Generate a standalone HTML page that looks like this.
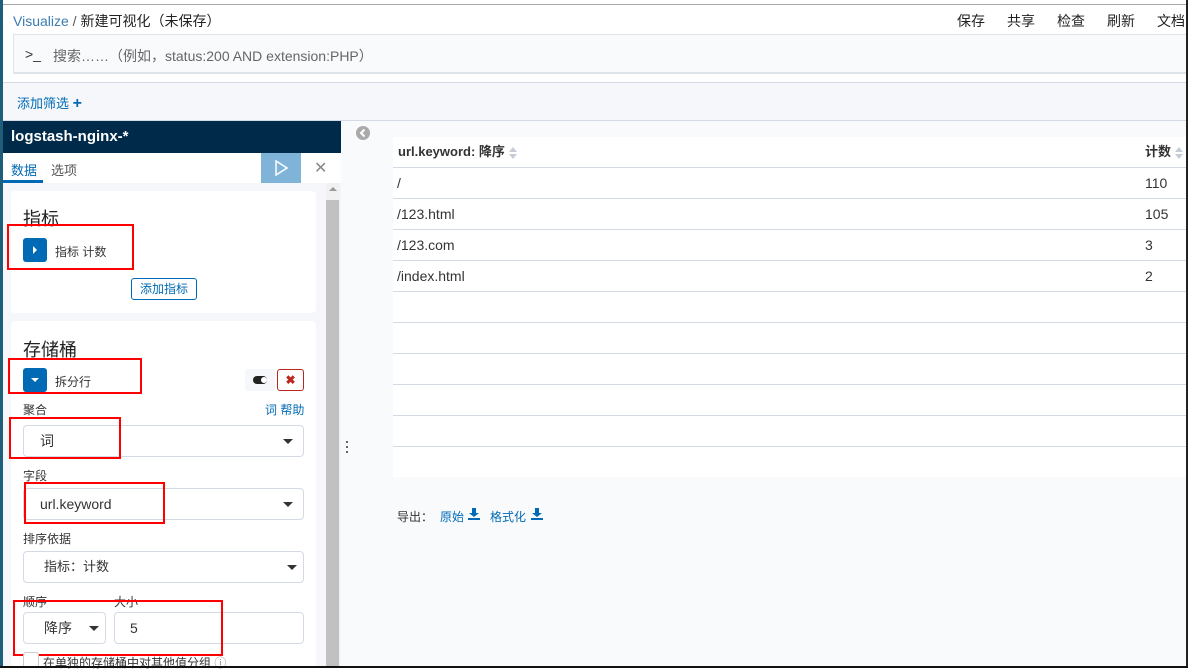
<!DOCTYPE html>
<html><head><meta charset="utf-8"><style>
*{box-sizing:border-box;margin:0;padding:0}
body{width:1188px;height:668px;position:relative;overflow:hidden;background:#fff;font-family:"Liberation Sans","Noto Sans CJK SC",sans-serif;font-size:13px;color:#333}
.a{position:absolute}
.red{position:absolute;border:2px solid #f00}
.sel{position:absolute;background:#fff;border:1px solid #d3dae6;border-radius:4px;height:32px;font-size:14px;line-height:30px;padding-left:16px;color:#333}
.car{position:absolute;right:10px;top:13px;width:0;height:0;border-left:5px solid transparent;border-right:5px solid transparent;border-top:5px solid #333}
.row{position:absolute;left:393px;width:795px;height:31px;border-bottom:1px solid #d3dae6;font-size:14px;line-height:30px}
.srt{display:inline-block;vertical-align:middle;width:9px;height:12px;position:relative}
.srt:before{content:"";position:absolute;left:0;top:0;border-left:4px solid transparent;border-right:4px solid transparent;border-bottom:5px solid #c5ccd6}
.srt:after{content:"";position:absolute;left:0;top:7px;border-left:4px solid transparent;border-right:4px solid transparent;border-top:5px solid #c5ccd6}
</style></head><body>
<div class="a" style="left:0;top:4px;width:1188px;height:1px;background:#aaa"></div>
<div class="a" style="left:13px;top:11px;font-size:14px;color:#3a7bb0">Visualize <span style="color:#555">/</span> <span style="color:#222">新建可视化（未保存）</span></div>
<div class="a" style="left:957px;top:11px;font-size:14px;color:#222">保存</div>
<div class="a" style="left:1007px;top:11px;font-size:14px;color:#222">共享</div>
<div class="a" style="left:1057px;top:11px;font-size:14px;color:#222">检查</div>
<div class="a" style="left:1107px;top:11px;font-size:14px;color:#222">刷新</div>
<div class="a" style="left:1157px;top:11px;font-size:14px;color:#222;width:30px;overflow:hidden;white-space:nowrap">文档</div>
<div class="a" style="left:13px;top:34px;width:1175px;height:40px;background:#f9fafc;border:1px solid #dfe3ea;border-bottom:2px solid #dfe3ea"></div>
<div class="a" style="left:25px;top:46px;font-size:14px;color:#333">&gt;_</div>
<div class="a" style="left:53px;top:46px;font-size:14px;color:#666">搜索……（例如，status:200 AND extension:PHP）</div>
<div class="a" style="left:0;top:82px;width:1188px;height:39px;background:#f5f7fa;border-top:1px solid #d3dae6;border-bottom:1px solid #d3dae6"></div>
<div class="a" style="left:17px;top:93px;font-size:13px;color:#006bb4">添加筛选 <b style="font-size:16px">+</b></div>
<div class="a" style="left:3px;top:121px;width:338px;height:547px;background:#f5f7fa"></div>
<div class="a" style="left:3px;top:121px;width:338px;height:32px;background:#002a4a;color:#fff;font-weight:bold;font-size:15px;line-height:32px;padding-left:8px">logstash-nginx-*</div>
<div class="a" style="left:3px;top:153px;width:338px;height:30px;background:#fff"></div>
<div class="a" style="left:11px;top:160px;font-size:13px;color:#006bb4">数据</div>
<div class="a" style="left:3px;top:180px;width:40px;height:3px;background:#006bb4"></div>
<div class="a" style="left:51px;top:160px;font-size:13px;color:#555">选项</div>
<div class="a" style="left:261px;top:153px;width:40px;height:30px;background:#7fb3d8"></div>
<svg class="a" style="left:274px;top:160px" width="14" height="16"><path d="M2 1 L13 8 L2 15 Z" fill="none" stroke="#fff" stroke-width="1.5"/></svg>
<div class="a" style="left:314px;top:158px;font-size:16px;color:#888">✕</div>
<div class="a" style="left:326px;top:183px;width:14px;height:485px;background:#f1f1f1"></div>
<div class="a" style="left:326px;top:200px;width:13px;height:468px;background:#c1c1c1"></div>
<div class="a" style="left:329px;top:187px;width:0;height:0;border-left:4px solid transparent;border-right:4px solid transparent;border-bottom:4px solid #999"></div>
<div class="a" style="left:11px;top:191px;width:305px;height:122px;background:#fff;border-radius:4px"></div>
<div class="a" style="left:23px;top:205px;font-size:18px;color:#222">指标</div>
<div class="a" style="left:23px;top:238px;width:24px;height:24px;background:#006bb4;border-radius:3px"></div>
<div class="a" style="left:33px;top:246px;width:0;height:0;border-top:4px solid transparent;border-bottom:4px solid transparent;border-left:4px solid #fff"></div>
<div class="a" style="left:55px;top:243px;font-size:12px;color:#333">指标 计数</div>
<div class="red" style="left:7px;top:224px;width:127px;height:46px"></div>
<div class="a" style="left:131px;top:278px;width:66px;height:22px;border:1px solid #006bb4;border-radius:3px;font-size:12px;color:#006bb4;text-align:center;line-height:20px">添加指标</div>
<div class="a" style="left:11px;top:321px;width:305px;height:347px;background:#fff;border-radius:4px"></div>
<div class="a" style="left:23px;top:336px;font-size:18px;color:#222">存储桶</div>
<div class="a" style="left:23px;top:368px;width:24px;height:24px;background:#006bb4;border-radius:3px"></div>
<div class="a" style="left:31px;top:378px;width:0;height:0;border-left:4px solid transparent;border-right:4px solid transparent;border-top:4px solid #fff"></div>
<div class="a" style="left:55px;top:373px;font-size:12px;color:#333">拆分行</div>
<div class="red" style="left:8px;top:358px;width:134px;height:36px"></div>
<div class="a" style="left:245px;top:369px;width:30px;height:22px;background:#f5f7fa;border-radius:3px"></div>
<div class="a" style="left:253px;top:376px;width:14px;height:8px;border-radius:4px;background:#222"></div>
<div class="a" style="left:261px;top:377px;width:6px;height:6px;border-radius:3px;background:#fff"></div>
<div class="a" style="left:277px;top:369px;width:27px;height:22px;border:1px solid #bd271e;border-radius:3px;color:#bd271e;font-size:12px;text-align:center;line-height:20px;font-weight:bold">✖</div>
<div class="a" style="left:23px;top:401px;font-size:12px;color:#333">聚合</div>
<div class="a" style="left:265px;top:401px;font-size:12px;color:#006bb4">词 帮助</div>
<div class="sel" style="left:23px;top:425px;width:281px">词<div class="car"></div></div>
<div class="red" style="left:9px;top:417px;width:112px;height:42px"></div>
<div class="a" style="left:23px;top:467px;font-size:12px;color:#333">字段</div>
<div class="sel" style="left:23px;top:488px;width:281px">url.keyword<div class="car"></div></div>
<div class="red" style="left:24px;top:482px;width:141px;height:42px"></div>
<div class="a" style="left:23px;top:530px;font-size:12px;color:#333">排序依据</div>
<div class="sel" style="left:23px;top:551px;width:281px;padding-left:20px;font-size:13px">指标：计数<div class="car" style="right:6px"></div></div>
<div class="a" style="left:23px;top:593px;font-size:12px;color:#333">顺序</div>
<div class="a" style="left:114px;top:593px;font-size:12px;color:#333">大小</div>
<div class="sel" style="left:23px;top:612px;width:83px;padding-left:20px">降序<div class="car" style="right:6px"></div></div>
<div class="sel" style="left:114px;top:612px;width:190px;padding-left:15px">5</div>
<div class="red" style="left:13px;top:600px;width:210px;height:56px"></div>
<div class="a" style="left:23px;top:652px;width:16px;height:16px;border:1px solid #ccc;border-radius:3px;background:#fff"></div>
<div class="a" style="left:43px;top:654px;font-size:12px;color:#333">在单独的存储桶中对其他值分组 <span style="color:#888">ⓘ</span></div>
<div class="a" style="left:0;top:0;width:3px;height:668px;background:#1f5e7a"></div>
<div class="a" style="left:341px;top:121px;width:847px;height:547px;background:#f9fafc"></div>
<svg class="a" style="left:356px;top:126px" width="14" height="14"><circle cx="7" cy="7" r="7" fill="#aaa"/><path d="M8.5 3.5 L5 7 L8.5 10.5" fill="none" stroke="#fff" stroke-width="2"/></svg>
<svg class="a" style="left:346px;top:441px" width="3" height="12"><rect x="0" y="0" width="2" height="2" fill="#666"/><rect x="0" y="5" width="2" height="2" fill="#666"/><rect x="0" y="10" width="2" height="2" fill="#666"/></svg>
<div class="a" style="left:393px;top:137px;width:795px;height:340px;background:#fff"></div>
<div class="row" style="top:137px;height:31px;font-weight:bold;font-size:13px;padding-left:5px">url.keyword: 降序 <span class="srt"></span><span class="a" style="left:752px;top:0">计数 <span class="srt"></span></span></div>
<div class="row" style="top:168px;padding-left:4px">/<span class="a" style="left:752px">110</span></div>
<div class="row" style="top:199px;padding-left:4px">/123.html<span class="a" style="left:752px">105</span></div>
<div class="row" style="top:230px;padding-left:4px">/123.com<span class="a" style="left:752px">3</span></div>
<div class="row" style="top:261px;padding-left:4px">/index.html<span class="a" style="left:752px">2</span></div>
<div class="row" style="top:292px"></div>
<div class="row" style="top:323px"></div>
<div class="row" style="top:354px"></div>
<div class="row" style="top:385px"></div>
<div class="row" style="top:416px"></div>
<div class="a" style="left:397px;top:508px;font-size:12px;color:#333">导出：</div>
<div class="a" style="left:440px;top:508px;font-size:12px;color:#006bb4">原始</div>
<svg class="a" style="left:468px;top:508px" width="12" height="12"><path d="M4 0h4v5h3L6 9 1 5h3z M0 10h12v2H0z" fill="#006bb4"/></svg>
<div class="a" style="left:490px;top:508px;font-size:12px;color:#006bb4">格式化</div>
<svg class="a" style="left:531px;top:508px" width="12" height="12"><path d="M4 0h4v5h3L6 9 1 5h3z M0 10h12v2H0z" fill="#006bb4"/></svg>
<div class="a" style="left:1186px;top:0;width:2px;height:668px;background:#222"></div>
<div class="a" style="left:0;top:666px;width:1188px;height:2px;background:#111"></div>
</body></html>
